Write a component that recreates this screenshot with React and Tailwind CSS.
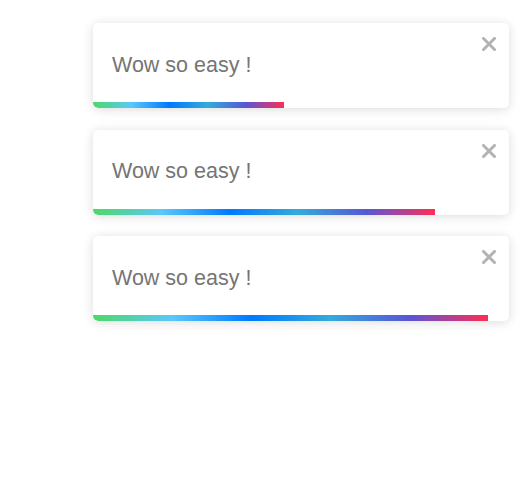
import React from 'react';

const toasts = [
  { id: 1, message: 'Wow so easy !', progress: 191 },
  { id: 2, message: 'Wow so easy !', progress: 342 },
  { id: 3, message: 'Wow so easy !', progress: 395 },
];

const CloseIcon = () => (
  <svg width="14" height="14" viewBox="0 0 14 14" aria-hidden="true">
    <path d="M1.5 1.5L12.5 12.5M12.5 1.5L1.5 12.5" stroke="#b3b3b3" strokeWidth="3" strokeLinecap="square" fill="none" />
  </svg>
);

const Toast = ({ message, progress }) => (
  <div className="flex h-[85px] w-[416px] flex-col overflow-hidden rounded-[5px] bg-white shadow-[0_1px_10px_0_rgba(0,0,0,0.1),0_2px_15px_0_rgba(0,0,0,0.05)]">
    <div className="flex flex-1 items-start">
      <p className="flex-1 self-center pl-[19px] pt-[6px] text-[21.5px] leading-none text-[#757575]">{message}</p>
      <button className="mr-[13px] mt-[14px] h-[14px] w-[14px] cursor-pointer">
        <CloseIcon />
      </button>
    </div>
    <div
      className="h-[6px] rounded-bl-[5px] bg-[linear-gradient(to_right,#4cd964,#5ac8fa,#007aff,#34aadc,#5856d6,#ff2d55)]"
      style={{ width: progress }}
    />
  </div>
);

export default function App() {
  return (
    <div className="flex h-[489px] w-[530px] flex-col items-end gap-[21.5px] bg-white pr-[21px] pt-[23px] font-['Liberation_Sans',Arial,sans-serif]">
      {toasts.map((toast) => (
        <Toast key={toast.id} message={toast.message} progress={toast.progress} />
      ))}
    </div>
  );
}
